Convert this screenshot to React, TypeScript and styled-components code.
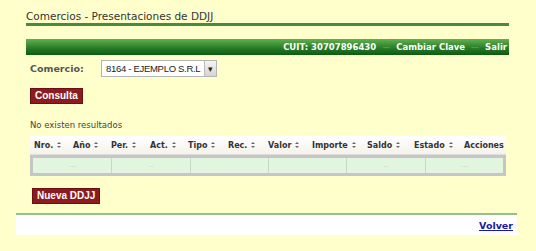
import styled, { createGlobalStyle } from 'styled-components';

const GlobalStyle = createGlobalStyle`
  body {
    margin: 0;
    background: #ffffcc;
    font-family: 'DejaVu Sans', Verdana, sans-serif;
  }
`;

const columns = ['Nro.', 'Año', 'Per.', 'Act.', 'Tipo', 'Rec.', 'Valor', 'Importe', 'Saldo', 'Estado', 'Acciones'];
const cells = ['...', '..', '', '', '..', '...'];

const SortIcon = () => (
  <svg width="4" height="6" viewBox="0 0 4 6">
    <path d="M2 0 L4 2 L0 2 Z M2 6 L4 4 L0 4 Z" fill="#666" />
  </svg>
);

const App = () => {
  return (
    <Page>
      <GlobalStyle />
      <Main>
        <Title>Comercios - Presentaciones de DDJJ</Title>
        <TopBar>
          <span>CUIT: 30707896430</span>
          <Sep>—</Sep>
          <span>Cambiar Clave</span>
          <Sep>—</Sep>
          <span>Salir</span>
        </TopBar>

        <Content>
          <FormRow>
            <Label>Comercio:</Label>
            <Select>
              <span>8164 - EJEMPLO S.R.L</span>
              <Arrow>▾</Arrow>
            </Select>
          </FormRow>

          <Button>Consulta</Button>

          <Message>No existen resultados</Message>

          <Table>
            <HeaderRow>
              {columns.map((c) => (
                <HeaderCell key={c}>
                  {c}
                  {c !== 'Acciones' && <SortIcon />}
                </HeaderCell>
              ))}
            </HeaderRow>
            <BodyRow>
              {cells.map((c, i) => (
                <BodyCell key={i}>{c}</BodyCell>
              ))}
            </BodyRow>
          </Table>

          <Button $left={2} $top={12}>Nueva DDJJ</Button>
        </Content>
      </Main>

      <Footer>
        <Link href="#">Volver</Link>
      </Footer>
    </Page>
  );
};

export default App;

const Page = styled.div`
  width: 536px;
  height: 251px;
  padding-top: 10px;
  box-sizing: border-box;
`;

const Main = styled.div`
  margin-left: 26px;
  width: 483px;
`;

const Title = styled.div`
  font-size: 10.5px;
  color: #333;
  line-height: 13px;
  border-bottom: 3px solid #4a8a3a;
`;

const TopBar = styled.div`
  margin-top: 13px;
  height: 16px;
  background: linear-gradient(#64b050, #247a24 60%, #0c5a10);
  display: flex;
  justify-content: flex-end;
  align-items: center;
  gap: 6px;
  padding-right: 2px;
  font-size: 8.5px;
  font-weight: bold;
  color: #fff;
`;

const Sep = styled.span`
  color: #4e9a4a;
  font-size: 8px;
`;

const Content = styled.div`
  padding-left: 4px;
`;

const FormRow = styled.div`
  display: flex;
  align-items: center;
  margin-top: 5px;
  height: 17px;
`;

const Label = styled.div`
  width: 71px;
  font-size: 9.5px;
  font-weight: bold;
  color: #555;
`;

const Select = styled.div`
  width: 116px;
  height: 17px;
  box-sizing: border-box;
  background: #fff;
  border: 1px solid #b5b5b5;
  display: flex;
  align-items: center;
  justify-content: space-between;
  padding-left: 4px;
  font-family: 'Liberation Sans', Arial, sans-serif;
  font-size: 9.5px;
  letter-spacing: -0.3px;
  white-space: nowrap;
  color: #222;
`;

const Arrow = styled.div`
  width: 11px;
  height: 15px;
  background: linear-gradient(#f4f4f4, #d4d4d4);
  border-left: 1px solid #bbb;
  display: flex;
  align-items: center;
  justify-content: center;
  font-size: 9px;
  color: #222;
`;

const Button = styled.div<{ $left?: number; $top?: number }>`
  display: inline-block;
  margin-top: ${(p) => p.$top ?? 11}px;
  margin-left: ${(p) => p.$left || 0}px;
  padding: 0 4px;
  height: 14px;
  line-height: 14px;
  background: #8c1a1e;
  border: 1px solid #6a1014;
  color: #fff;
  font-family: 'Liberation Sans', Arial, sans-serif;
  font-size: 10px;
  font-weight: bold;
`;

const Message = styled.div`
  margin-top: 16px;
  font-size: 8.5px;
  color: #444;
  line-height: 11px;
`;

const Table = styled.div`
  margin-top: 5px;
  width: 476px;
`;

const HeaderRow = styled.div`
  display: grid;
  grid-template-columns: 39px 38px 39px 38px 40px 40px 44px 55px 47px 50px 46px;
  height: 18px;
  align-items: center;
  background: linear-gradient(#fff, #f6f2ea);
  border-bottom: 1px solid #ddd;
`;

const HeaderCell = styled.div`
  display: flex;
  align-items: center;
  gap: 4px;
  padding-left: 4px;
  font-size: 8px;
  font-weight: bold;
  color: #333;
  white-space: nowrap;
`;

const BodyRow = styled.div`
  display: grid;
  grid-template-columns: repeat(6, 1fr);
  border: 3px solid #c6c6c6;
  height: 15px;
  background: #e2f6df;
`;

const BodyCell = styled.div`
  border-left: 1px solid #c8d8c6;
  font-size: 7px;
  color: #b8c8b8;
  text-align: center;
  line-height: 15px;
  &:first-child {
    border-left: none;
  }
`;

const Footer = styled.div`
  margin: 9px 0 0 16px;
  width: 501px;
  height: 22px;
  box-sizing: border-box;
  background: #fff;
  border-top: 2px solid #97c08e;
  display: flex;
  justify-content: flex-end;
  align-items: center;
  padding-right: 4px;
`;

const Link = styled.a`
  font-size: 9.5px;
  font-weight: bold;
  color: #1a1aa0;
  text-decoration: underline;
`;
